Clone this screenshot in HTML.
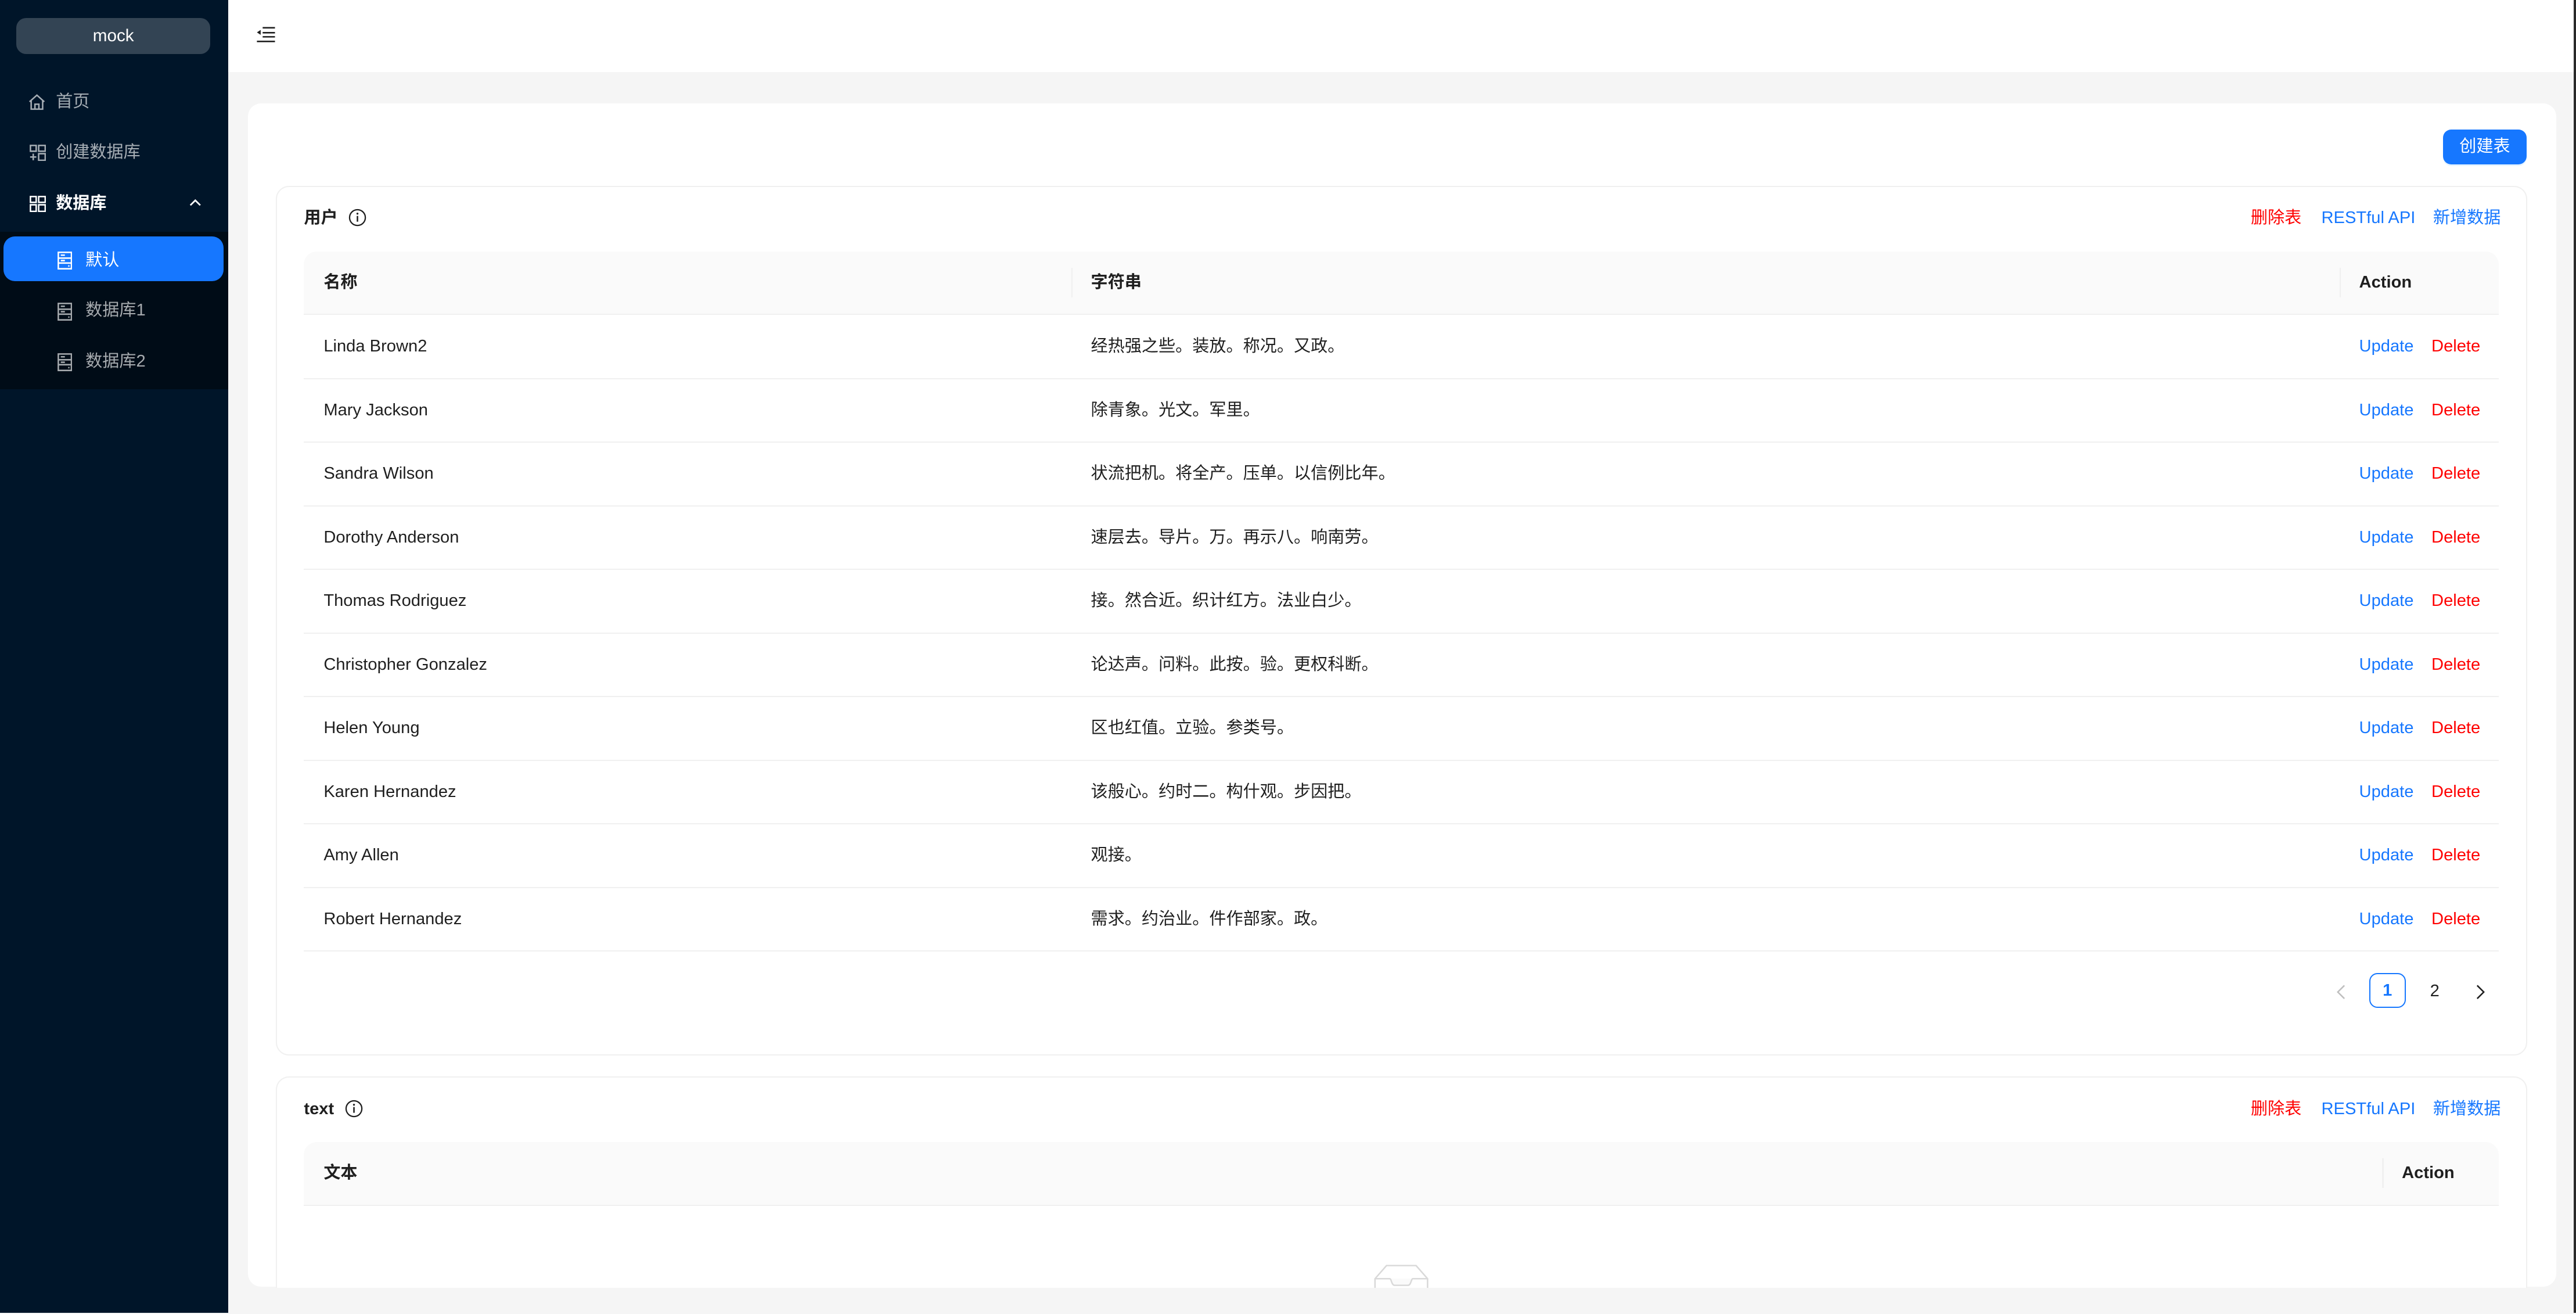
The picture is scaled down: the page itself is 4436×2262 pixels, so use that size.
<!DOCTYPE html>
<html><head><meta charset="utf-8">
<style>
html,body{margin:0;padding:0;}
body{width:1568px;height:799px;zoom:2.82908;overflow:hidden;background:#f5f5f5;font-family:"Liberation Sans","Noto Sans CJK SC",sans-serif;font-size:10.3px;color:#1f1f1f;position:relative;}
.abs{position:absolute;}
.lh{line-height:14px;}
.side{left:0;top:0;width:139px;height:799px;background:#001529;}
.logo{left:10px;top:11px;width:118px;height:22px;background:#334454;border-radius:6px;color:#fff;text-align:center;line-height:22px;font-size:10.5px;}
.mi{left:0;width:139px;height:28px;line-height:28px;color:rgba(255,255,255,.65);}
.mi svg{position:absolute;top:9px;}
.sub{left:0;top:141px;width:139px;height:96px;background:#000c17;}
.sel{left:2px;top:144px;width:134px;height:27px;background:#1677ff;border-radius:7px;}
.header{left:139px;top:0;width:1429px;height:44px;background:#fff;}
.card{left:151px;top:63px;width:1405px;height:720px;background:#fff;border-radius:8px;}
.btn{left:1487px;top:79px;width:51px;height:21px;background:#1677ff;border-radius:5px;color:#fff;text-align:center;line-height:21px;box-shadow:0 1px 0 rgba(5,145,255,.1);}
.inner{border:1px solid #f0f0f0;border-radius:8px;background:#fff;}
.red{color:#ff0000}.blue{color:#1677ff}
.th{background:#fafafa;border-bottom:1px solid #f0f0f0;font-weight:bold;border-radius:8px 8px 0 0;}
.row{border-bottom:1px solid #f0f0f0;}
.sep{width:1px;height:18px;background:#f0f0f0;top:10px;}
</style></head><body>
<div class="abs side"></div>
<div class="abs logo">mock</div>
<div class="abs mi" style="top:48px"><svg style="left:17px" width="11" height="10" viewBox="0 0 11 10"><path d="M1 5 L5.5 1 L10 5 M2 4.2 V9.5 H9 V4.2 M4.3 9.5 V6.5 H6.7 V9.5" fill="none" stroke="rgba(255,255,255,.65)" stroke-width="0.9"/></svg><span class="abs" style="left:34px">首页</span></div>
<div class="abs mi" style="top:79px"><svg style="left:18px" width="10" height="10" viewBox="0 0 10 10"><path d="M0.5 0.5h3.5v3.5h-3.5z M5.5 0.5h4v3.5h-4z M5.5 5.5h4v4h-4z M2.2 5.5v4 M0.3 7.5h3.8" fill="none" stroke="rgba(255,255,255,.65)" stroke-width="0.9"/></svg><span class="abs" style="left:34px">创建数据库</span></div>
<div class="abs mi" style="top:110px;color:#fff;font-weight:bold"><svg style="left:18px" width="10" height="10" viewBox="0 0 10 10"><path d="M0.5 0.5h3.5v3.5h-3.5z M5.5 0.5h4v3.5h-4z M0.5 5.5h3.5v4h-3.5z M5.5 5.5h4v4h-4z" fill="none" stroke="#fff" stroke-width="0.9"/></svg><span class="abs" style="left:34px">数据库</span><svg style="left:115px;top:11px" width="8" height="5" viewBox="0 0 8 5"><path d="M1 4 L4 1 L7 4" fill="none" stroke="#fff" stroke-width="1"/></svg></div>
<div class="abs sub"></div>
<div class="abs sel"></div>
<div class="abs mi" style="top:145px;height:27px;line-height:27px;color:#fff"><svg style="left:35px;top:8px" width="9" height="11" viewBox="0 0 9 11"><path d="M0.5 0.5h8v10h-8z M0.5 4h8 M0.5 7h8 M2 2.2h2.5 M2 5.5h2.5 M6.5 8.8h0.8" fill="none" stroke="#fff" stroke-width="0.9"/></svg><span class="abs" style="left:52px">默认</span></div>
<div class="abs mi" style="top:175px"><svg style="left:35px;top:9px" width="9" height="11" viewBox="0 0 9 11"><path d="M0.5 0.5h8v10h-8z M0.5 4h8 M0.5 7h8 M2 2.2h2.5 M2 5.5h2.5 M6.5 8.8h0.8" fill="none" stroke="rgba(255,255,255,.65)" stroke-width="0.9"/></svg><span class="abs" style="left:52px">数据库1</span></div>
<div class="abs mi" style="top:206px"><svg style="left:35px;top:9px" width="9" height="11" viewBox="0 0 9 11"><path d="M0.5 0.5h8v10h-8z M0.5 4h8 M0.5 7h8 M2 2.2h2.5 M2 5.5h2.5 M6.5 8.8h0.8" fill="none" stroke="rgba(255,255,255,.65)" stroke-width="0.9"/></svg><span class="abs" style="left:52px">数据库2</span></div>

<div class="abs header"></div>
<svg class="abs" style="left:156px;top:16px" width="12" height="10" viewBox="0 0 12 10"><path d="M4 1h7.5 M4 4h7.5 M4 6.5h7.5 M0.5 9.3h11" stroke="#1f1f1f" stroke-width="0.9"/><path d="M0.5 3.8 L2.8 2.3 V5.3z" fill="#1f1f1f"/></svg>

<div class="abs card"></div>
<div class="abs btn">创建表</div>

<div class="abs inner" style="left:168px;top:113px;width:1369px;height:528px"></div>
<div class="abs lh" style="left:185px;top:126px;font-weight:bold">用户</div>
<svg class="abs" style="left:212px;top:127px" width="11" height="11" viewBox="0 0 11 11"><circle cx="5.5" cy="5.5" r="4.8" fill="none" stroke="#1f1f1f" stroke-width="0.8"/><path d="M5.5 4.5v3.5" stroke="#1f1f1f" stroke-width="0.9"/><circle cx="5.5" cy="3.1" r="0.6" fill="#1f1f1f"/></svg>
<div class="abs red lh" style="left:1370px;top:126px">删除表</div>
<div class="abs blue lh" style="left:1413px;top:126px">RESTful API</div>
<div class="abs blue lh" style="left:1481px;top:126px">新增数据</div>

<div class="abs th" style="left:185px;top:153px;width:1336px;height:38px;line-height:38px">
<span class="abs" style="left:12px">名称</span>
<div class="abs sep" style="left:467px"></div>
<span class="abs" style="left:479px">字符串</span>
<div class="abs sep" style="left:1239px"></div>
<span class="abs" style="left:1251px">Action</span>
</div>

<div class="abs" style="left:185px;top:192px;width:1336px">
<div class="row" style="height:38px;position:relative;line-height:38px"><span class="abs" style="left:12px">Linda Brown2</span><span class="abs" style="left:479px">经热强之些。装放。称况。又政。</span><span class="abs blue" style="left:1251px">Update</span><span class="abs red" style="left:1295px">Delete</span></div>
<div class="row" style="height:38px;position:relative;line-height:38px"><span class="abs" style="left:12px">Mary Jackson</span><span class="abs" style="left:479px">除青象。光文。军里。</span><span class="abs blue" style="left:1251px">Update</span><span class="abs red" style="left:1295px">Delete</span></div>
<div class="row" style="height:38px;position:relative;line-height:38px"><span class="abs" style="left:12px">Sandra Wilson</span><span class="abs" style="left:479px">状流把机。将全产。压单。以信例比年。</span><span class="abs blue" style="left:1251px">Update</span><span class="abs red" style="left:1295px">Delete</span></div>
<div class="row" style="height:38px;position:relative;line-height:38px"><span class="abs" style="left:12px">Dorothy Anderson</span><span class="abs" style="left:479px">速层去。导片。万。再示八。响南劳。</span><span class="abs blue" style="left:1251px">Update</span><span class="abs red" style="left:1295px">Delete</span></div>
<div class="row" style="height:38px;position:relative;line-height:38px"><span class="abs" style="left:12px">Thomas Rodriguez</span><span class="abs" style="left:479px">接。然合近。织计红方。法业白少。</span><span class="abs blue" style="left:1251px">Update</span><span class="abs red" style="left:1295px">Delete</span></div>
<div class="row" style="height:38px;position:relative;line-height:38px"><span class="abs" style="left:12px">Christopher Gonzalez</span><span class="abs" style="left:479px">论达声。问料。此按。验。更权科断。</span><span class="abs blue" style="left:1251px">Update</span><span class="abs red" style="left:1295px">Delete</span></div>
<div class="row" style="height:38px;position:relative;line-height:38px"><span class="abs" style="left:12px">Helen Young</span><span class="abs" style="left:479px">区也红值。立验。参类号。</span><span class="abs blue" style="left:1251px">Update</span><span class="abs red" style="left:1295px">Delete</span></div>
<div class="row" style="height:38px;position:relative;line-height:38px"><span class="abs" style="left:12px">Karen Hernandez</span><span class="abs" style="left:479px">该般心。约时二。构什观。步因把。</span><span class="abs blue" style="left:1251px">Update</span><span class="abs red" style="left:1295px">Delete</span></div>
<div class="row" style="height:38px;position:relative;line-height:38px"><span class="abs" style="left:12px">Amy Allen</span><span class="abs" style="left:479px">观接。</span><span class="abs blue" style="left:1251px">Update</span><span class="abs red" style="left:1295px">Delete</span></div>
<div class="row" style="height:38px;position:relative;line-height:38px"><span class="abs" style="left:12px">Robert Hernandez</span><span class="abs" style="left:479px">需求。约治业。件作部家。政。</span><span class="abs blue" style="left:1251px">Update</span><span class="abs red" style="left:1295px">Delete</span></div>
</div>

<svg class="abs" style="left:1422px;top:599px" width="6" height="9" viewBox="0 0 6 9"><path d="M5 0.5 L1 4.5 L5 8.5" fill="none" stroke="#bfbfbf" stroke-width="0.9"/></svg>
<div class="abs" style="left:1442px;top:592px;width:21px;height:20px;border:1px solid #1677ff;border-radius:5px;color:#1677ff;font-weight:bold;text-align:center;line-height:20px">1</div>
<div class="abs" style="left:1476px;top:592px;width:12px;text-align:center;line-height:22px">2</div>
<svg class="abs" style="left:1507px;top:599px" width="6" height="9" viewBox="0 0 6 9"><path d="M1 0.5 L5 4.5 L1 8.5" fill="none" stroke="#1f1f1f" stroke-width="0.9"/></svg>

<div class="abs inner" style="left:168px;top:655px;width:1369px;height:140px;border-bottom:none"></div>
<div class="abs lh" style="left:185px;top:668px;font-weight:bold">text</div>
<svg class="abs" style="left:210px;top:669px" width="11" height="11" viewBox="0 0 11 11"><circle cx="5.5" cy="5.5" r="4.8" fill="none" stroke="#1f1f1f" stroke-width="0.8"/><path d="M5.5 4.5v3.5" stroke="#1f1f1f" stroke-width="0.9"/><circle cx="5.5" cy="3.1" r="0.6" fill="#1f1f1f"/></svg>
<div class="abs red lh" style="left:1370px;top:668px">删除表</div>
<div class="abs blue lh" style="left:1413px;top:668px">RESTful API</div>
<div class="abs blue lh" style="left:1481px;top:668px">新增数据</div>
<div class="abs th" style="left:185px;top:695px;width:1336px;height:38px;line-height:38px">
<span class="abs" style="left:12px">文本</span>
<div class="abs sep" style="left:1265px"></div>
<span class="abs" style="left:1277px">Action</span>
</div>
<svg class="abs" style="left:836px;top:768px" width="34" height="20" viewBox="0 0 34 20"><path d="M1 10 L8 2 H26 L33 10 V20 H1z" fill="#fff" stroke="#d9d9d9" stroke-width="0.9"/><path d="M1 10 H10 C11 10 11 14 13 14 H21 C23 14 23 10 24 10 H33" fill="#fafafa" stroke="#d9d9d9" stroke-width="0.9"/></svg>
<div class="abs" style="left:139px;top:783.5px;width:1429px;height:16px;background:#f5f5f5"></div>
<div class="abs" style="left:1566.5px;top:0;width:1.5px;height:799px;background:#2a2a2a"></div>
</body></html>
